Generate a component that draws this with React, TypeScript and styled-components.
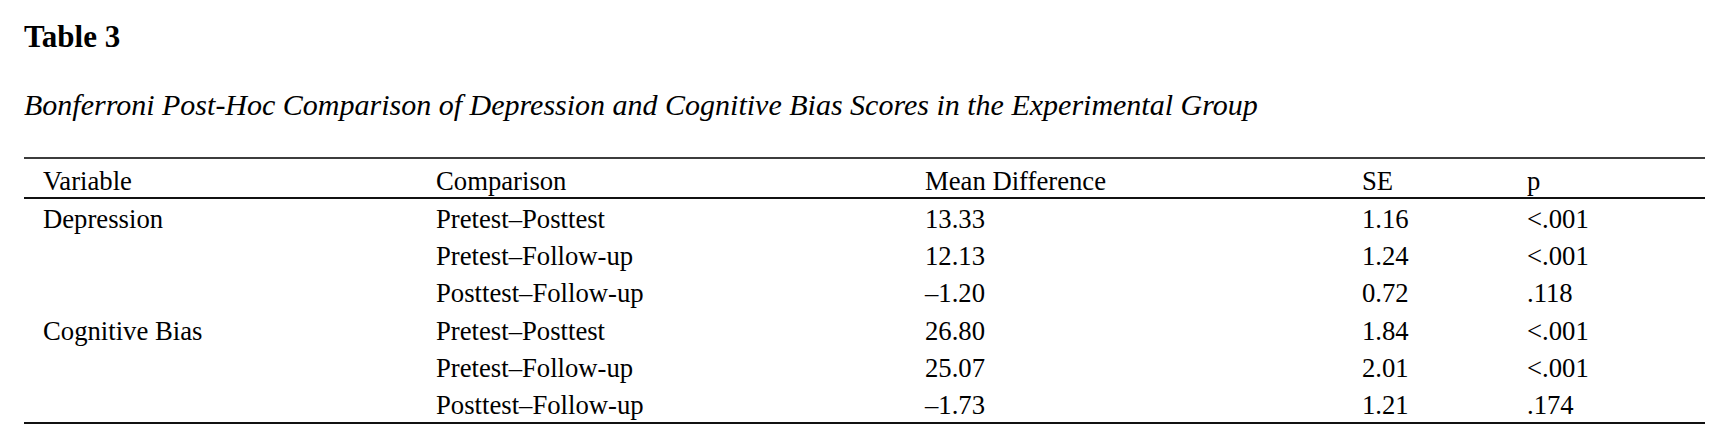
import React from "react";
import styled, { createGlobalStyle } from "styled-components";

const Global = createGlobalStyle`
  html, body { margin: 0; padding: 0; background: #fff; }
  body { font-family: "Liberation Serif", "Times New Roman", serif; color: #000; }
`;

const Page = styled.div`
  width: 1724px;
  height: 441px;
  box-sizing: border-box;
  padding: 22px 19px 0 24px;
  background: #fff;
`;

const Title = styled.div`
  font-family: "Liberation Serif", "Times New Roman", serif;
  font-weight: 700;
  font-size: 31px;
  line-height: 30px;
`;

const Caption = styled.div`
  font-family: "Liberation Serif", "Times New Roman", serif;
  font-style: italic;
  font-size: 30px;
  line-height: 30px;
  margin-top: 38px;
`;

const Table = styled.div`
  margin-top: 37px;
  width: 1681px;
  display: grid;
  grid-template-columns: 393px 489px 437px 165px 197px;
  border-top: 2px solid #3c3c3c;
  border-bottom: 2px solid #111;
`;

const HeadCell = styled.div`
  font-size: 26.7px;
  line-height: 30px;
  height: 40px;
  box-sizing: border-box;
  padding: 7px 0 0 19px;
  border-bottom: 2px solid #111;
  white-space: nowrap;
`;

const Cell = styled.div`
  font-size: 26.7px;
  line-height: 33px;
  height: 37.2px;
  box-sizing: border-box;
  padding: 4px 0 0 19px;
  white-space: nowrap;
`;

const headers = ["Variable", "Comparison", "Mean Difference", "SE", "p"];

const rows: string[][] = [
  ["Depression", "Pretest–Posttest", "13.33", "1.16", "<.001"],
  ["", "Pretest–Follow-up", "12.13", "1.24", "<.001"],
  ["", "Posttest–Follow-up", "–1.20", "0.72", ".118"],
  ["Cognitive Bias", "Pretest–Posttest", "26.80", "1.84", "<.001"],
  ["", "Pretest–Follow-up", "25.07", "2.01", "<.001"],
  ["", "Posttest–Follow-up", "–1.73", "1.21", ".174"],
];

export default function App() {
  return (
    <>
      <Global />
      <Page>
        <Title>Table 3</Title>
        <Caption>
          Bonferroni Post-Hoc Comparison of Depression and Cognitive Bias Scores in the Experimental Group
        </Caption>
        <Table>
          {headers.map((h) => (
            <HeadCell key={h}>{h}</HeadCell>
          ))}
          {rows.map((r, i) =>
            r.map((c, j) => <Cell key={`${i}-${j}`}>{c}</Cell>)
          )}
        </Table>
      </Page>
    </>
  );
}
